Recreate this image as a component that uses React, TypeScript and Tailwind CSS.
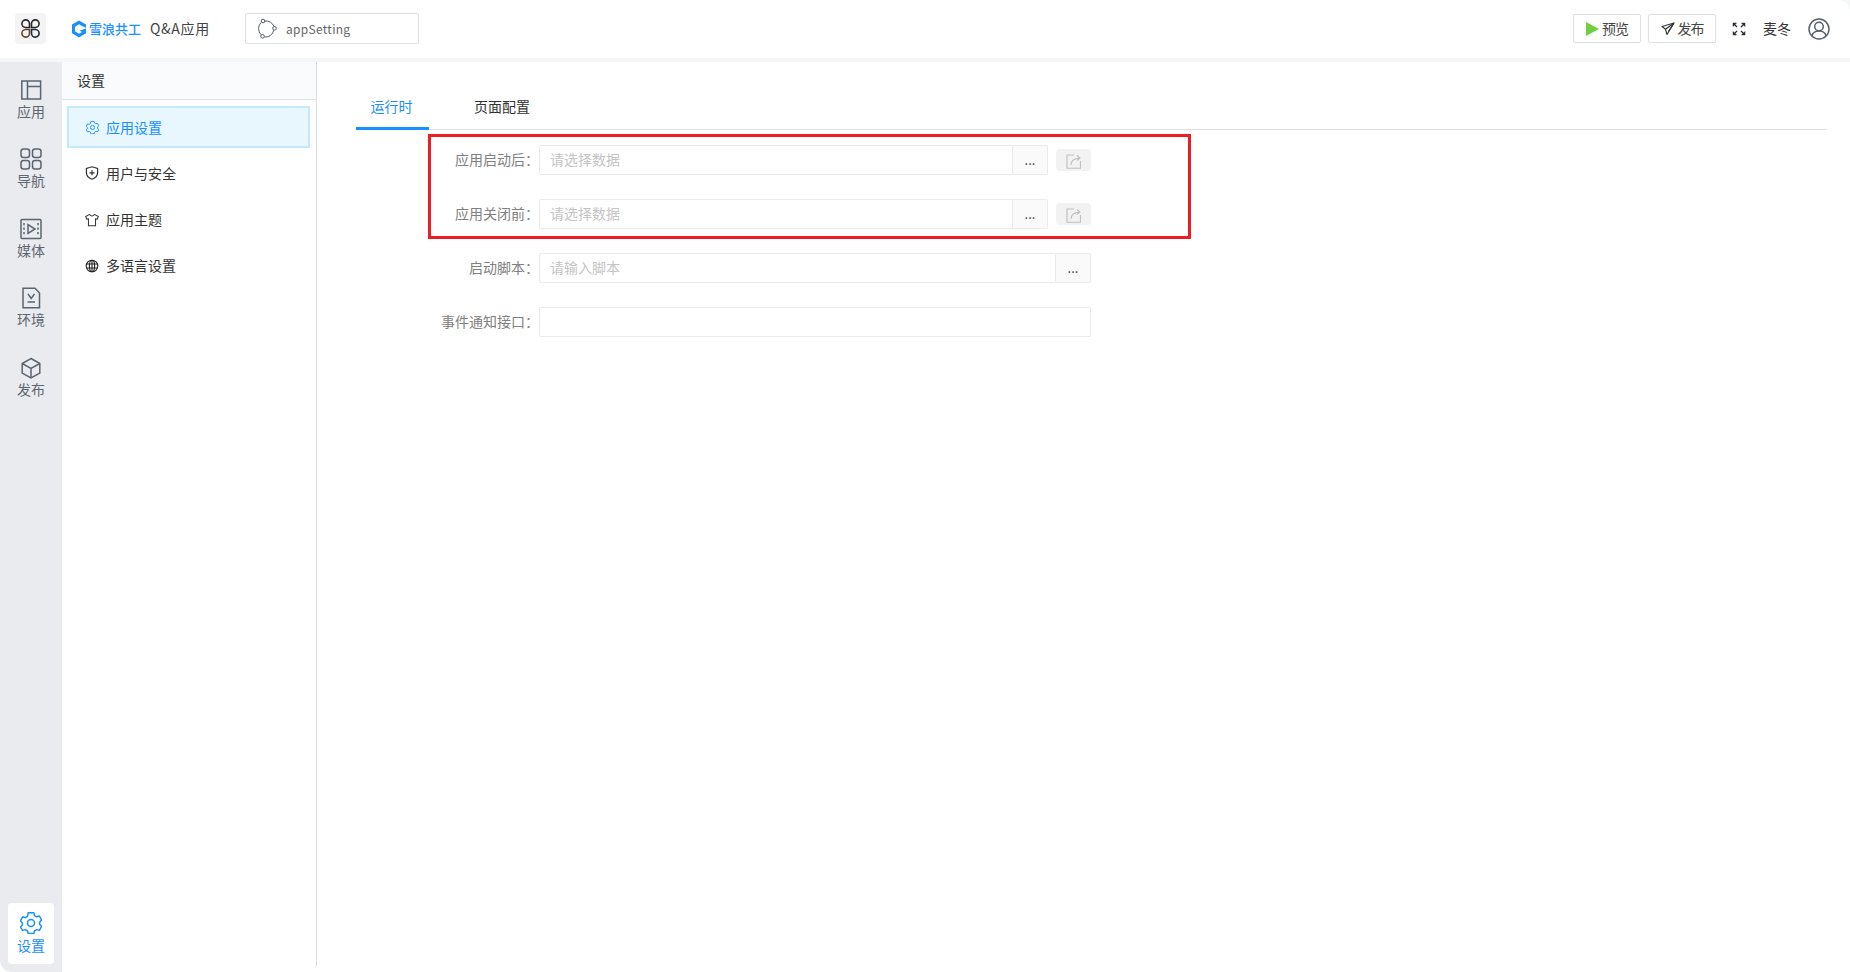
import React from "react";

const FONT = { fontFamily: '"Noto Sans CJK SC", "Noto Sans", sans-serif' };

function AppIcon() {
  return (
    <svg width="21" height="21" viewBox="0 0 21 21" fill="none" stroke="#27272a" strokeWidth="1.6">
      <path d="M9.5 9.5H5.5a3.8 3.8 0 1 1 4-4z" />
      <path d="M11.5 9.5h4a3.8 3.8 0 1 0-4-4z" />
      <path d="M9.5 11.5H5.5a3.8 3.8 0 1 0 4 4z" stroke="#6b4423" />
      <path d="M11.5 11.5h4a3.8 3.8 0 1 1-4 4z" stroke="#1f2a44" />
    </svg>
  );
}

function BrandIcon() {
  return (
    <svg width="16" height="18" viewBox="0 0 16 17" preserveAspectRatio="none">
      <path d="M8 0.5 15 4.3v3.1L11.3 6 8 4 4 6.3v4.4l4 2.3 3-1.7-2.500-1.300 6.500-2v4.500L8 16.500 1 12.500V4.300z" fill="#1890ff" />
    </svg>
  );
}

function FlowIcon() {
  return (
    <svg width="22" height="22" viewBox="0 0 22 22" fill="none" stroke="#555b63" strokeWidth="1">
      <path d="M8.8 3a8.5 8.5 0 0 1 9.2 5.5" />
      <path d="M5 4.5A9 9 0 0 0 4.8 16.5" />
      <path d="M8.5 19a8.2 8.2 0 0 0 9.2-6.8" />
      <circle cx="7" cy="3" r="1.8" />
      <circle cx="18.5" cy="10.3" r="1.8" />
      <circle cx="6.5" cy="18.3" r="1.8" />
    </svg>
  );
}

const railStroke = { fill: "none", stroke: "#5b6570", strokeWidth: 1.5 };

function RailApp() {
  return (
    <svg width="22" height="22" viewBox="0 0 22 22" {...railStroke}>
      <rect x="1.8" y="2" width="18.8" height="18" />
      <path d="M7.5 2v18M7.5 7.5h13" />
    </svg>
  );
}
function RailNav() {
  return (
    <svg width="22" height="22" viewBox="0 0 22 22" {...railStroke}>
      <rect x="1" y="1" width="8.5" height="8.5" rx="2.5" />
      <rect x="12.5" y="1" width="8.5" height="8.5" rx="2.5" />
      <rect x="1" y="12.5" width="8.5" height="8.5" rx="2.5" />
      <rect x="12.5" y="12.5" width="8.5" height="8.5" rx="2.5" />
    </svg>
  );
}
function RailMedia() {
  return (
    <svg width="22" height="22" viewBox="0 0 22 22" {...railStroke}>
      <rect x="1" y="1.5" width="20" height="19" rx="1" />
      <path d="M8 6.5v9l7-4.5z" />
      <path d="M4 5v2.2M4 9.5v2.2M4 14v2.2M18 5v2.2M18 9.5v2.2M18 14v2.2" />
    </svg>
  );
}
function RailEnv() {
  return (
    <svg width="22" height="22" viewBox="0 0 22 22" {...railStroke}>
      <path d="M3 1.2h12l4.5 4.8v14.8H3z" />
      <path d="M8 7l3.2 4.5L14.5 7M7.5 15h7.5" />
    </svg>
  );
}
function RailBox() {
  return (
    <svg width="22" height="22" viewBox="0 0 22 22" {...railStroke}>
      <path d="M11 1.5l8.8 5v9.6L11 21l-8.8-4.9V6.5z" />
      <path d="M2.2 6.5L11 11.5l8.8-5M11 11.5V21" />
    </svg>
  );
}
function Gear({ size, color, sw }: { size: number; color: string; sw: number }) {
  return (
    <svg width={size} height={size} viewBox="0 0 22 22" fill="none" stroke={color} strokeWidth={sw} strokeLinejoin="round">
      <path d="M8.2 1.6h5.6l.7 2.8 2.1 1.2 2.8-.8 2.2 4.1-2 2.1v2l2 2.1-2.2 4.1-2.8-.8-2.1 1.2-.7 2.8H8.2l-.7-2.8-2.1-1.2-2.8.8L.4 15.9l2-2.1v-2l-2-2.1 2.2-4.1 2.8.8 2.1-1.200z" transform="translate(0 -.8)" />
      <circle cx="11" cy="11" r="3.5" />
    </svg>
  );
}
function ShieldIcon() {
  return (
    <svg width="14" height="14" viewBox="0 0 14 14" fill="none" stroke="#333" strokeWidth="1.2">
      <path d="M7 .8l5.6 1.7v4.3c0 3-2.5 5.3-5.6 6.4C3.900 12.100 1.400 9.800 1.400 6.800V2.500z" />
      <path d="M7 4.3v5M4.5 6.800h5" />
    </svg>
  );
}
function ShirtIcon() {
  return (
    <svg width="15" height="14" viewBox="0 0 15 14" fill="none" stroke="#333" strokeWidth="1.1" strokeLinejoin="round">
      <path d="M5 1c.5 1.200 1.400 1.800 2.500 1.800S9.500 2.200 10 1l4.300 2.200-1.300 3-1.700-.6v7.600H3.700V5.600L2 6.200.7 3.200z" />
    </svg>
  );
}
function GlobeIcon() {
  return (
    <svg width="14" height="14" viewBox="0 0 14 14" fill="none" stroke="#222" strokeWidth="1.1">
      <circle cx="7" cy="7" r="5.8" />
      <ellipse cx="7" cy="7" rx="2.6" ry="5.8" />
      <path d="M1.500 5h11M1.500 9h11M7 1v12" />
    </svg>
  );
}
function ShareIcon() {
  return (
    <svg width="15" height="15" viewBox="0 0 15 15" fill="none" stroke="#bfbfc4" strokeWidth="1.1">
      <path d="M8 1H1v13.300h13.500V7" />
      <path d="M5 11c0-4 2.500-6.500 8.500-7M11 1.500l3 2.500-3 2.500" />
    </svg>
  );
}
function SendIcon() {
  return (
    <svg width="14" height="14" viewBox="0 0 14 14" fill="none" stroke="#333" strokeWidth="1.1" strokeLinejoin="round">
      <path d="M13 1L1 4.500l3.500 2.800 1.500 5.200z" />
      <path d="M13 1L4.500 7.300M13 1L7.500 9.200" />
    </svg>
  );
}
function ExpandIcon() {
  return (
    <svg width="14" height="14" viewBox="0 0 14 14" fill="#2b2f36" stroke="#2b2f36" strokeWidth="1.3">
      <path d="M1 4.500V1h3.500zM9.500 1H13v3.500zM13 9.500V13H9.500zM4.500 13H1V9.500z" strokeWidth="0.5" />
      <path d="M2 2l3 3M12 2L9 5M12 12L9 9M2 12l3-3" />
    </svg>
  );
}
function UserIcon() {
  return (
    <svg width="22" height="22" viewBox="0 0 22 22" fill="none" stroke="#56616e" strokeWidth="1.5">
      <circle cx="11" cy="11" r="10" />
      <circle cx="11" cy="8.500" r="4.300" />
      <path d="M3.800 18c1-3.500 3.800-5 7.200-5s6.200 1.500 7.200 5" />
    </svg>
  );
}

function RailItem({ icon, label }: { icon: React.ReactNode; label: string }) {
  return (
    <div className="flex h-[69.4px] flex-col items-center">
      <div className="flex h-[22px] items-center justify-center">{icon}</div>
      <span className="mt-px text-[14px] leading-[19px] text-[#5f6670]">{label}</span>
    </div>
  );
}

function MenuItem({ icon, label, active }: { icon: React.ReactNode; label: string; active?: boolean }) {
  return (
    <div
      className={
        active
          ? "flex h-[42px] items-center gap-[7px] border-2 border-[#c4e9ff] bg-[#e8f6fe] pl-[16px] text-[#1890ff]"
          : "flex h-[42px] items-center gap-[7px] border-2 border-transparent pl-[16px] text-[#333333]"
      }
    >
      <span className="flex w-[14px] items-center justify-center">{icon}</span>
      <span className="pb-px text-[14px] leading-[20px]">{label}</span>
    </div>
  );
}

function FormRow({ label, placeholder, addon, share }: { label: string; placeholder?: string; addon?: boolean; share?: boolean }) {
  return (
    <div className="flex h-[30px] items-center">
      <label className="w-[183px] pb-px text-right text-[14px] text-[#808080]">{label}：</label>
      <div className="flex flex-1 items-center">
        <div className="flex h-[30px] flex-1 items-center rounded-l-[2px] border border-[#ebebeb] bg-white pb-px pl-[10px] text-[14px] text-[#c4c4c4]">
          {placeholder}
        </div>
        {addon && (
          <div className="flex h-[30px] w-[35px] items-center justify-center rounded-r-[2px] border border-l-0 border-[#ebebeb] bg-[#fafafa] pb-[1px] text-[13px] leading-none text-[#333333]">
            ...
          </div>
        )}
        {share && (
          <div className="ml-[8px] flex h-[22px] w-[35px] items-center justify-center rounded-[4px] bg-[#f2f2f2]">
            <span className="mt-[2px] flex">
              <ShareIcon />
            </span>
          </div>
        )}
      </div>
    </div>
  );
}

export default function App() {
  return (
    <div className="flex h-[972px] w-[1850px] flex-col overflow-hidden bg-[#f4f6f8]" style={FONT}>
      <header className="flex h-[58px] items-center rounded-tr-[12px] bg-white pb-[1px] pr-[20px]">
        <div className="ml-[15px] flex h-[31px] w-[31px] items-center justify-center rounded-[4px] bg-[#f4f4f5]">
          <AppIcon />
        </div>
        <div className="ml-[25px] flex items-center gap-[2px] text-[#1890ff]">
          <BrandIcon />
          <span className="text-[13px] font-medium leading-none">雪浪共工</span>
        </div>
        <span className="ml-[9px] text-[14px] tracking-[0.7px] text-[#444444]">Q&amp;A应用</span>
        <div className="ml-[35px] flex h-[31px] w-[174px] items-center gap-[8px] rounded-[2px] border border-[#dcdfe3] bg-white pl-[10px] text-[12px] tracking-[0.3px] text-[#666666]">
          <FlowIcon />
          <span>appSetting</span>
        </div>
        <div className="ml-auto flex items-center">
          <div className="flex h-[29px] w-[68px] items-center justify-center gap-[3px] rounded-[2px] border border-[#dcdfe3] text-[14px] text-[#444444]">
            <svg width="13" height="14" viewBox="0 0 13 14">
              <path d="M0 0l13 7-13 7z" fill="#6fcf3f" />
            </svg>
            <span className="tracking-[-1px]">预览</span>
          </div>
          <div className="ml-[7px] flex h-[29px] w-[68px] items-center justify-center gap-[3px] rounded-[2px] border border-[#dcdfe3] text-[14px] text-[#444444]">
            <SendIcon />
            <span className="tracking-[-1px]">发布</span>
          </div>
          <span className="ml-[16px] flex">
            <ExpandIcon />
          </span>
          <span className="ml-[17px] text-[14px] text-[#333333]">麦冬</span>
          <span className="ml-[17px] flex">
            <UserIcon />
          </span>
        </div>
      </header>
      <div className="h-[4px] bg-[#f4f6f8]" />
      <div className="flex min-h-0 flex-1 bg-white">
        <nav className="flex w-[62px] flex-col rounded-bl-[12px] bg-[#e9ebef] pt-[17px]">
          <RailItem icon={<RailApp />} label="应用" />
          <RailItem icon={<RailNav />} label="导航" />
          <RailItem icon={<RailMedia />} label="媒体" />
          <RailItem icon={<RailEnv />} label="环境" />
          <RailItem icon={<RailBox />} label="发布" />
          <div className="mx-[8px] mb-[8px] mt-auto flex h-[61px] flex-col items-center rounded-[4px] bg-white pt-[9px]">
            <Gear size={22} color="#1890ff" sw={1.5} />
            <span className="mt-[2px] text-[14px] leading-[19px] text-[#1890ff]">设置</span>
          </div>
        </nav>
        <aside className="mb-[6px] flex w-[255px] flex-col border-r border-[#dcdcdc] bg-white">
          <div className="flex h-[38px] items-center border-b border-[#e0e3e8] bg-[#fafbfc] pl-[15px] text-[14px] text-[#333333]">
            设置
          </div>
          <div className="flex flex-col gap-[4.3px] pl-[5px] pr-[6px] pt-[6px]">
            <MenuItem active icon={<Gear size={13} color="#1890ff" sw={1.6} />} label="应用设置" />
            <MenuItem icon={<ShieldIcon />} label="用户与安全" />
            <MenuItem icon={<ShirtIcon />} label="应用主题" />
            <MenuItem icon={<GlobeIcon />} label="多语言设置" />
          </div>
        </aside>
        <main className="flex-1 pl-[39px] pr-[23px]">
          <div className="flex h-[68px] items-end border-b border-[#dfdfdf]">
            <div className="-mb-px flex h-[37px] w-[73px] items-start justify-center border-b-[3px] border-[#1890ff] pr-[2px] pt-[3px] text-[14px] text-[#1890ff]">
              运行时
            </div>
            <div className="-mb-px flex h-[37px] items-start pl-[45px] pt-[3px] text-[14px] text-[#333333]">
              页面配置
            </div>
          </div>
          <div className="relative flex w-[735px] flex-col gap-[24px] pt-[15px]">
            <FormRow label="应用启动后" placeholder="请选择数据" addon share />
            <FormRow label="应用关闭前" placeholder="请选择数据" addon share />
            <FormRow label="启动脚本" placeholder="请输入脚本" addon />
            <FormRow label="事件通知接口" />
            <div className="pointer-events-none absolute left-[72px] top-[4px] h-[105px] w-[763px] border-[3px] border-[#ee1c25]" />
          </div>
        </main>
      </div>
    </div>
  );
}
